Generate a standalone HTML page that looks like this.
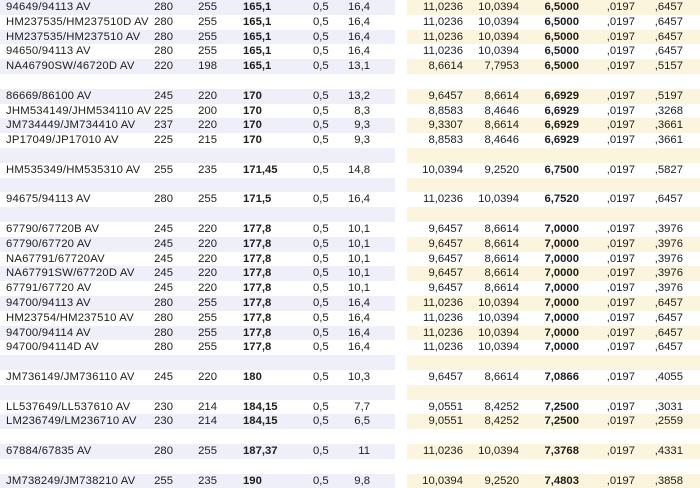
<!DOCTYPE html>
<html><head><meta charset="utf-8"><style>
body{margin:0;width:700px;height:488px;overflow:hidden;background:#fff;font-family:"Liberation Sans",sans-serif;font-size:11.3px;color:#1e1e1e}
.r{position:relative;height:14.8px;line-height:14.8px}
.r.s::before{content:"";position:absolute;left:0;top:0;width:395px;height:100%;background:#eeeff8}
.r.s::after{content:"";position:absolute;left:407px;top:0;width:293px;height:100%;background:#fbf5de}
.r span{position:absolute;top:0;z-index:1;white-space:nowrap}
.a{left:6px;letter-spacing:0.2px}
.b{right:527px}.c{right:483px}.d{left:243px;font-weight:bold}.e{left:313px}.f{right:330px}
.g{right:237px}.h{right:181px}.i{right:121px;font-weight:bold}.j{right:65px}.k{right:17px}
</style></head><body>
<div class="r s"><span class="a">94649/94113 AV</span><span class="b">280</span><span class="c">255</span><span class="d">165,1</span><span class="e">0,5</span><span class="f">16,4</span><span class="g">11,0236</span><span class="h">10,0394</span><span class="i">6,5000</span><span class="j">,0197</span><span class="k">,6457</span></div>
<div class="r"><span class="a">HM237535/HM237510D AV</span><span class="b">280</span><span class="c">255</span><span class="d">165,1</span><span class="e">0,5</span><span class="f">16,4</span><span class="g">11,0236</span><span class="h">10,0394</span><span class="i">6,5000</span><span class="j">,0197</span><span class="k">,6457</span></div>
<div class="r s"><span class="a">HM237535/HM237510 AV</span><span class="b">280</span><span class="c">255</span><span class="d">165,1</span><span class="e">0,5</span><span class="f">16,4</span><span class="g">11,0236</span><span class="h">10,0394</span><span class="i">6,5000</span><span class="j">,0197</span><span class="k">,6457</span></div>
<div class="r"><span class="a">94650/94113 AV</span><span class="b">280</span><span class="c">255</span><span class="d">165,1</span><span class="e">0,5</span><span class="f">16,4</span><span class="g">11,0236</span><span class="h">10,0394</span><span class="i">6,5000</span><span class="j">,0197</span><span class="k">,6457</span></div>
<div class="r s"><span class="a">NA46790SW/46720D AV</span><span class="b">220</span><span class="c">198</span><span class="d">165,1</span><span class="e">0,5</span><span class="f">13,1</span><span class="g">8,6614</span><span class="h">7,7953</span><span class="i">6,5000</span><span class="j">,0197</span><span class="k">,5157</span></div>
<div class="r"></div>
<div class="r s"><span class="a">86669/86100 AV</span><span class="b">245</span><span class="c">220</span><span class="d">170</span><span class="e">0,5</span><span class="f">13,2</span><span class="g">9,6457</span><span class="h">8,6614</span><span class="i">6,6929</span><span class="j">,0197</span><span class="k">,5197</span></div>
<div class="r"><span class="a">JHM534149/JHM534110 AV</span><span class="b">225</span><span class="c">200</span><span class="d">170</span><span class="e">0,5</span><span class="f">8,3</span><span class="g">8,8583</span><span class="h">8,4646</span><span class="i">6,6929</span><span class="j">,0197</span><span class="k">,3268</span></div>
<div class="r s"><span class="a">JM734449/JM734410 AV</span><span class="b">237</span><span class="c">220</span><span class="d">170</span><span class="e">0,5</span><span class="f">9,3</span><span class="g">9,3307</span><span class="h">8,6614</span><span class="i">6,6929</span><span class="j">,0197</span><span class="k">,3661</span></div>
<div class="r"><span class="a">JP17049/JP17010 AV</span><span class="b">225</span><span class="c">215</span><span class="d">170</span><span class="e">0,5</span><span class="f">9,3</span><span class="g">8,8583</span><span class="h">8,4646</span><span class="i">6,6929</span><span class="j">,0197</span><span class="k">,3661</span></div>
<div class="r s"></div>
<div class="r"><span class="a">HM535349/HM535310 AV</span><span class="b">255</span><span class="c">235</span><span class="d">171,45</span><span class="e">0,5</span><span class="f">14,8</span><span class="g">10,0394</span><span class="h">9,2520</span><span class="i">6,7500</span><span class="j">,0197</span><span class="k">,5827</span></div>
<div class="r s"></div>
<div class="r"><span class="a">94675/94113 AV</span><span class="b">280</span><span class="c">255</span><span class="d">171,5</span><span class="e">0,5</span><span class="f">16,4</span><span class="g">11,0236</span><span class="h">10,0394</span><span class="i">6,7520</span><span class="j">,0197</span><span class="k">,6457</span></div>
<div class="r s"></div>
<div class="r"><span class="a">67790/67720B AV</span><span class="b">245</span><span class="c">220</span><span class="d">177,8</span><span class="e">0,5</span><span class="f">10,1</span><span class="g">9,6457</span><span class="h">8,6614</span><span class="i">7,0000</span><span class="j">,0197</span><span class="k">,3976</span></div>
<div class="r s"><span class="a">67790/67720 AV</span><span class="b">245</span><span class="c">220</span><span class="d">177,8</span><span class="e">0,5</span><span class="f">10,1</span><span class="g">9,6457</span><span class="h">8,6614</span><span class="i">7,0000</span><span class="j">,0197</span><span class="k">,3976</span></div>
<div class="r"><span class="a">NA67791/67720AV</span><span class="b">245</span><span class="c">220</span><span class="d">177,8</span><span class="e">0,5</span><span class="f">10,1</span><span class="g">9,6457</span><span class="h">8,6614</span><span class="i">7,0000</span><span class="j">,0197</span><span class="k">,3976</span></div>
<div class="r s"><span class="a">NA67791SW/67720D AV</span><span class="b">245</span><span class="c">220</span><span class="d">177,8</span><span class="e">0,5</span><span class="f">10,1</span><span class="g">9,6457</span><span class="h">8,6614</span><span class="i">7,0000</span><span class="j">,0197</span><span class="k">,3976</span></div>
<div class="r"><span class="a">67791/67720 AV</span><span class="b">245</span><span class="c">220</span><span class="d">177,8</span><span class="e">0,5</span><span class="f">10,1</span><span class="g">9,6457</span><span class="h">8,6614</span><span class="i">7,0000</span><span class="j">,0197</span><span class="k">,3976</span></div>
<div class="r s"><span class="a">94700/94113 AV</span><span class="b">280</span><span class="c">255</span><span class="d">177,8</span><span class="e">0,5</span><span class="f">16,4</span><span class="g">11,0236</span><span class="h">10,0394</span><span class="i">7,0000</span><span class="j">,0197</span><span class="k">,6457</span></div>
<div class="r"><span class="a">HM23754/HM237510 AV</span><span class="b">280</span><span class="c">255</span><span class="d">177,8</span><span class="e">0,5</span><span class="f">16,4</span><span class="g">11,0236</span><span class="h">10,0394</span><span class="i">7,0000</span><span class="j">,0197</span><span class="k">,6457</span></div>
<div class="r s"><span class="a">94700/94114 AV</span><span class="b">280</span><span class="c">255</span><span class="d">177,8</span><span class="e">0,5</span><span class="f">16,4</span><span class="g">11,0236</span><span class="h">10,0394</span><span class="i">7,0000</span><span class="j">,0197</span><span class="k">,6457</span></div>
<div class="r"><span class="a">94700/94114D AV</span><span class="b">280</span><span class="c">255</span><span class="d">177,8</span><span class="e">0,5</span><span class="f">16,4</span><span class="g">11,0236</span><span class="h">10,0394</span><span class="i">7,0000</span><span class="j">,0197</span><span class="k">,6457</span></div>
<div class="r s"></div>
<div class="r"><span class="a">JM736149/JM736110 AV</span><span class="b">245</span><span class="c">220</span><span class="d">180</span><span class="e">0,5</span><span class="f">10,3</span><span class="g">9,6457</span><span class="h">8,6614</span><span class="i">7,0866</span><span class="j">,0197</span><span class="k">,4055</span></div>
<div class="r s"></div>
<div class="r"><span class="a">LL537649/LL537610 AV</span><span class="b">230</span><span class="c">214</span><span class="d">184,15</span><span class="e">0,5</span><span class="f">7,7</span><span class="g">9,0551</span><span class="h">8,4252</span><span class="i">7,2500</span><span class="j">,0197</span><span class="k">,3031</span></div>
<div class="r s"><span class="a">LM236749/LM236710 AV</span><span class="b">230</span><span class="c">214</span><span class="d">184,15</span><span class="e">0,5</span><span class="f">6,5</span><span class="g">9,0551</span><span class="h">8,4252</span><span class="i">7,2500</span><span class="j">,0197</span><span class="k">,2559</span></div>
<div class="r"></div>
<div class="r s"><span class="a">67884/67835 AV</span><span class="b">280</span><span class="c">255</span><span class="d">187,37</span><span class="e">0,5</span><span class="f">11</span><span class="g">11,0236</span><span class="h">10,0394</span><span class="i">7,3768</span><span class="j">,0197</span><span class="k">,4331</span></div>
<div class="r"></div>
<div class="r s"><span class="a">JM738249/JM738210 AV</span><span class="b">255</span><span class="c">235</span><span class="d">190</span><span class="e">0,5</span><span class="f">9,8</span><span class="g">10,0394</span><span class="h">9,2520</span><span class="i">7,4803</span><span class="j">,0197</span><span class="k">,3858</span></div>
</body></html>
